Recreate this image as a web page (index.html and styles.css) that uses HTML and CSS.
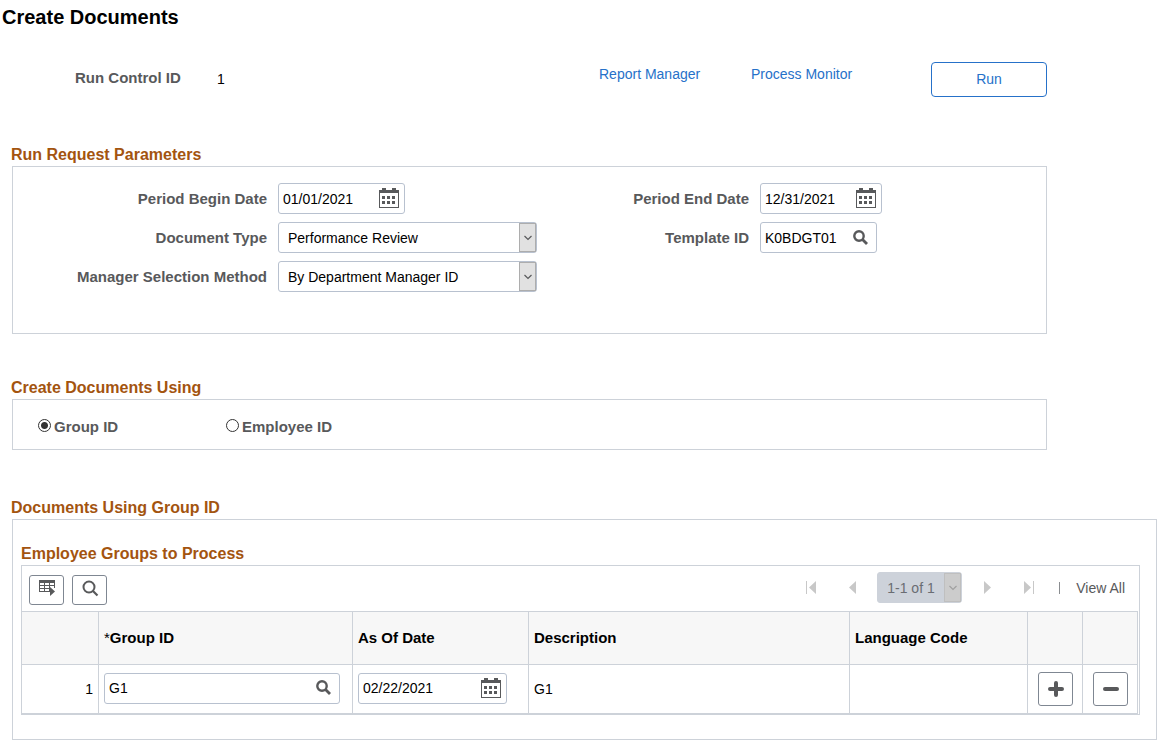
FILE: index.html
```html
<!DOCTYPE html>
<html lang="en">
<head>
<meta charset="utf-8">
<title>Create Documents</title>
<link rel="stylesheet" href="styles.css">
</head>
<body>
<svg class="defs" aria-hidden="true">
  <symbol id="calendar" viewBox="0 0 20 20">
    <path d="M0 2h3V0h4v2h6V0h4v2h3v18H0zM1 5v14h18V5z" fill-rule="evenodd"/>
    <path d="M3 8h3v3H3zM8 8h3v3H8zM13 8h3v3h-3zM3 13h3v3H3zM8 13h3v3H8zM13 13h3v3h-3z"/>
  </symbol>
  <symbol id="lookup" viewBox="0 0 15 15">
    <circle cx="6" cy="6" r="4.7" fill="none" stroke="currentColor" stroke-width="2.4"/>
    <path d="M9.5 9.5L14 14" stroke="currentColor" stroke-width="2.8"/>
  </symbol>
  <symbol id="chevron" viewBox="0 0 8 6">
    <path d="M0.5 1L4 4.5L7.500 1" fill="none" stroke="currentColor" stroke-width="1.2"/>
  </symbol>
</svg>
<form class="page">
  <h1 class="title">Create Documents</h1>
  <header class="run-bar">
    <span class="label">Run Control ID</span>
    <span class="run-id">1</span>
    <a class="link" href="#reports">Report Manager</a>
    <a class="link monitor" href="#monitor">Process Monitor</a>
    <button class="run" type="button">Run</button>
  </header>

  <section class="group narrow">
    <h2 class="heading">Run Request Parameters</h2>
    <div class="panel params">
      <label class="label" for="begin">Period Begin Date</label>
      <div class="field begin"><input id="begin" value="01/01/2021"><button class="icon-btn" type="button" aria-label="Choose begin date"><svg class="calendar"><use href="#calendar"/></svg></button></div>
      <label class="label" for="end">Period End Date</label>
      <div class="field end"><input id="end" value="12/31/2021"><button class="icon-btn" type="button" aria-label="Choose end date"><svg class="calendar"><use href="#calendar"/></svg></button></div>
      <label class="label" for="doctype">Document Type</label>
      <div class="select"><select id="doctype"><option>Performance Review</option></select><span class="arrow"><svg><use href="#chevron"/></svg></span></div>
      <label class="label" for="template">Template ID</label>
      <div class="field template"><input id="template" value="K0BDGT01"><button class="icon-btn" type="button" aria-label="Look up template"><svg class="lookup"><use href="#lookup"/></svg></button></div>
      <label class="label" for="method">Manager Selection Method</label>
      <div class="select"><select id="method"><option>By Department Manager ID</option></select><span class="arrow"><svg><use href="#chevron"/></svg></span></div>
    </div>
  </section>

  <section class="group narrow">
    <h2 class="heading">Create Documents Using</h2>
    <div class="panel choices">
      <div class="choice"><input type="radio" name="using" id="by-group" checked><label class="label" for="by-group">Group ID</label></div>
      <div class="choice"><input type="radio" name="using" id="by-employee"><label class="label" for="by-employee">Employee ID</label></div>
    </div>
  </section>

  <section class="group">
    <h2 class="heading">Documents Using Group ID</h2>
    <div class="panel documents">
      <h3 class="heading subheading">Employee Groups to Process</h3>
      <div class="panel grid-box">
        <div class="toolbar">
          <button class="tool" type="button" aria-label="Grid actions">
            <svg class="grid-icon" viewBox="0 0 17 16"><path d="M0 0h16v3H0zM0 5h16v1H0zM0 8h11v1H0zM0 11h11v1H0zM0 3h1v9H0zM5 3h1v9H5zM10 3h1v9h-1zM15 3h1v5h-1z"/><path d="M11 7l5 4.500L11 16z"/></svg>
          </button>
          <button class="tool" type="button" aria-label="Find">
            <svg class="find-icon" viewBox="0 0 17 17"><circle cx="7" cy="7" r="5.500" fill="none" stroke="currentColor" stroke-width="2"/><path d="M11 11l4.500 4.500" stroke="currentColor" stroke-width="2.200"/></svg>
          </button>
          <nav class="pager" aria-label="Rows">
            <button type="button" class="page-btn first" aria-label="First"><svg viewBox="0 0 11 13"><path d="M0 0h1v13H0zM10 0v13L3 6.500z"/></svg></button>
            <button type="button" class="page-btn previous" aria-label="Previous"><svg viewBox="0 0 11 13"><path d="M9 0v13L2 6.500z"/></svg></button>
            <div class="select range"><select aria-label="Row range"><option>1-1 of 1</option></select><span class="arrow"><svg><use href="#chevron"/></svg></span></div>
            <button type="button" class="page-btn" aria-label="Next"><svg viewBox="0 0 11 13"><path d="M2 0v13l7-6.500z"/></svg></button>
            <button type="button" class="page-btn last" aria-label="Last"><svg viewBox="0 0 11 13"><path d="M10 0h1v13h-1zM1 0v13l7-6.500z"/></svg></button>
            <span class="divider"></span>
            <button type="button" class="view-all">View All</button>
          </nav>
        </div>
        <table class="grid">
          <colgroup><col class="c-num"><col class="c-group"><col class="c-date"><col><col class="c-lang"><col class="c-act"><col class="c-act"></colgroup>
          <thead>
            <tr><th></th><th><span class="star">*</span>Group ID</th><th>As Of Date</th><th>Description</th><th>Language Code</th><th></th><th></th></tr>
          </thead>
          <tbody>
            <tr>
              <td class="num">1</td>
              <td><div class="field group-id"><input aria-label="Group ID" value="G1"><button class="icon-btn" type="button" aria-label="Look up group"><svg class="lookup"><use href="#lookup"/></svg></button></div></td>
              <td><div class="field as-of"><input aria-label="As Of Date" value="02/22/2021"><button class="icon-btn" type="button" aria-label="Choose date"><svg class="calendar"><use href="#calendar"/></svg></button></div></td>
              <td>G1</td>
              <td></td>
              <td class="act"><button class="row-btn" type="button" aria-label="Add row"><svg viewBox="0 0 16 16"><path d="M8 2v12M2 8h12"/></svg></button></td>
              <td class="act"><button class="row-btn" type="button" aria-label="Delete row"><svg viewBox="0 0 16 16"><path d="M2 8h12"/></svg></button></td>
            </tr>
          </tbody>
        </table>
      </div>
    </div>
  </section>
</form>
</body>
</html>
```
FILE: styles.css
```css
* { box-sizing: border-box; }
body {
  margin: 0;
  background: #fff;
  color: #000;
  font-family: Arial, "Liberation Sans", sans-serif;
  font-size: 14px;
  line-height: 18px;
}
input, select, button { font: inherit; color: inherit; margin: 0; }
button { background: none; border: 0; padding: 0; }
svg { display: block; fill: currentColor; }
.defs { display: none; }

.page { padding: 4px 7px 7px 12px; }
.title { margin: 0 0 0 -10px; font-size: 20px; line-height: 26px; }
.label { font-size: 15px; font-weight: bold; color: #58595b; }

.run-bar {
  display: flex;
  align-items: flex-start;
  margin: 32px 110px 45px 0;
  padding-left: 63px;
}
.run-bar .label { margin-top: 7px; width: 142px; }
.run-id { margin-top: 8px; flex: 1; }
.link { margin-top: 3px; color: #2671c9; text-decoration: none; width: 152px; }
.monitor { width: 180px; }
.run {
  width: 116px;
  height: 35px;
  padding-bottom: 2px;
  border: 1px solid #2671c9;
  border-radius: 4px;
  color: #2671c9;
}

.group { margin-bottom: 41px; }
.group + .group { margin-bottom: 45px; }
.group:last-child { margin-bottom: 0; }
.narrow { margin-right: 110px; }
.heading { margin: 0 0 0 -1px; padding-top: 2px; font-size: 16px; line-height: 22px; color: #a3540f; }
.subheading { margin-left: 0; }
.panel { border: 1px solid #cdd2d9; }

.params {
  display: grid;
  grid-template-columns: 254px 259px 201px 1fr;
  gap: 8px 11px;
  align-items: center;
  padding: 16px 0 41px;
}
.params .label { text-align: right; }

.field {
  display: flex;
  align-items: center;
  height: 31px;
  border: 1px solid #b8c1cf;
  border-radius: 3px;
  background: #fff;
}
.field input {
  flex: 1;
  min-width: 0;
  height: 29px;
  padding: 0 0 0 4px;
  border: 0;
  outline: 0;
  background: none;
}
.icon-btn { color: #58595b; padding: 0 5px 1px 4px; }
.calendar { width: 20px; height: 20px; }
.lookup { width: 15px; height: 15px; margin-right: 3px; }
.begin { width: 127px; }
.end { width: 122px; }
.template { width: 117px; }
.group-id { width: 236px; }
.as-of { width: 149px; }

.select { position: relative; height: 31px; }
.select select {
  appearance: none;
  width: 100%;
  height: 31px;
  padding: 0 20px 0 9px;
  border: 1px solid #b8c1cf;
  border-radius: 3px;
  background: #fff;
}
.arrow {
  position: absolute;
  top: 1px;
  right: 1px;
  bottom: 1px;
  width: 17px;
  display: grid;
  place-items: center;
  border: 1px solid #adadad;
  background: #e1e1e1;
  color: #58595b;
  pointer-events: none;
}
.arrow svg { width: 8px; height: 6px; }

.choices { display: flex; padding: 16px 0 11px 25px; }
.choice { display: flex; align-items: flex-start; width: 188px; }
.choice input {
  appearance: none;
  width: 13px;
  height: 13px;
  margin: 3px 3px 0 0;
  border: 1px solid #333;
  border-radius: 50%;
}
.choice input:checked { background: radial-gradient(circle, #333 3px, #fff 4px); }
.choice .label { line-height: 22px; }

.documents { padding: 21px 16px 24px 8px; }
.grid-box { padding-right: 1px; }
.toolbar { display: flex; align-items: center; gap: 8px; height: 45px; padding: 0 13px 2px 7px; }
.tool {
  display: flex;
  justify-content: center;
  width: 35px;
  height: 30px;
  margin-top: 5px;
  padding: 4px 0 0 2px;
  border: 1px solid #7f8792;
  border-radius: 3px;
  color: #58595b;
}
.grid-icon { width: 17px; height: 16px; }
.find-icon { width: 17px; height: 17px; }
.pager { display: flex; align-items: center; margin-left: auto; color: #58595b; }
.page-btn { color: #c8c8c8; margin: 0 20px; }
.page-btn svg { width: 11px; height: 13px; }
.first { margin-right: 10px; }
.previous { margin-right: 19px; }
.last { margin: 0 25px 0 10px; }
.range select { background: #cdd2da; border-color: #cdd2da; color: #6a6d73; }
.range { width: 85px; }
.range .arrow { background: #cccccc; border-color: #bfbfbf; color: #a0a0a0; }
.divider { width: 1px; height: 12px; background: #8a8d90; }
.view-all { margin-left: 16px; }

.grid { width: 100%; table-layout: fixed; border-collapse: separate; border-spacing: 0; border-top: 1px solid #cdd2d9; }
.grid th, .grid td {
  border-right: 1px solid #cdd2d9;
  border-bottom: 1px solid #cdd2d9;
  padding: 0 5px;
  text-align: left;
}
.grid th { height: 53px; background: #f7f7f7; font-size: 15px; }
.grid td { height: 49px; }
.grid .field { margin-bottom: 2px; }
.grid .num { text-align: right; }
.star { font-weight: normal; }
.c-num { width: 77px; }
.c-group { width: 254px; }
.c-date { width: 176px; }
.c-lang { width: 178px; }
.c-act { width: 55px; }
.grid .act { padding: 0 9px 0 10px; }
.row-btn {
  display: flex;
  justify-content: center;
  align-items: center;
  width: 35px;
  height: 34px;
  border: 1px solid #7f8792;
  border-radius: 3px;
  color: #58595b;
}
.row-btn svg { width: 16px; height: 16px; fill: none; stroke: currentColor; stroke-width: 4; stroke-linecap: round; }
```
